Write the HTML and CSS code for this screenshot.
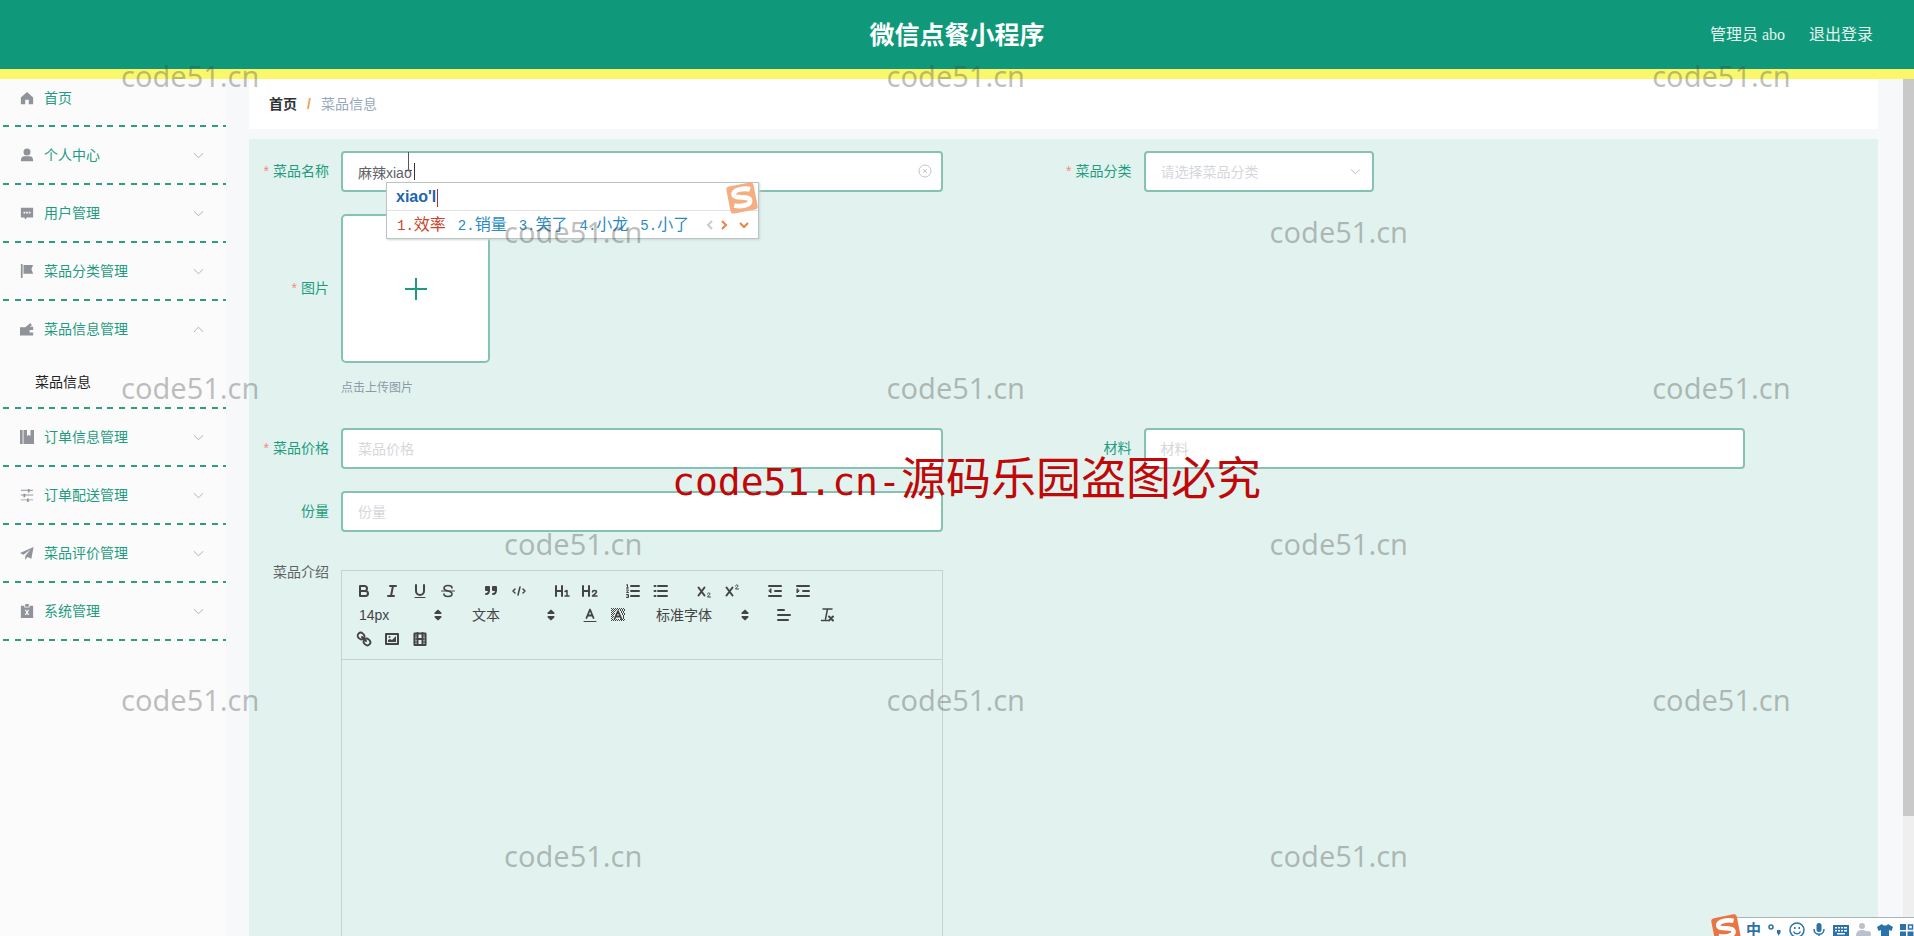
FILE: index.html
```html
<!DOCTYPE html>
<html lang="zh-CN">
<head>
<meta charset="utf-8">
<title>微信点餐小程序</title>
<link rel="stylesheet" href="styles.css">
</head>
<body>
<svg class="defs" aria-hidden="true">
  <symbol id="chev" viewBox="0 0 12 12"><path d="M1 3.500l5 5 5-5" fill="none" stroke="currentColor"/></symbol>
  <symbol id="sort" viewBox="0 0 18 18"><path d="M6 7l3-3 3 3zM6 11l3 3 3-3z" fill="currentColor" stroke="currentColor" stroke-width="2" stroke-linejoin="round"/></symbol>
  <symbol id="sogou" viewBox="0 0 32 32"><g transform="rotate(-11 16 16)"><rect x="3" y="3" width="26" height="26" rx="3" fill="currentColor"/><path d="M25 9.500C20 7 9 6.500 9 11.500c0 4.500 14 3 14 8 0 5-10 4.500-15.500 2" fill="none" stroke="#fff" stroke-width="4.500"/></g></symbol>
</svg>
<div class="app">
  <header class="topbar">
    <h1 class="brand">微信点餐小程序</h1>
    <nav class="account"><a href="#">管理员 abo</a><a href="#">退出登录</a></nav>
  </header>
  <div class="body">
    <aside class="sidebar">
      <ul class="menu">
        <li class="item first"><a class="link" href="#"><svg viewBox="0 0 16 16"><path d="M8 1L1 7.500V15h5v-5h4v5h5V7.500z"/></svg><span>首页</span></a></li>
        <li class="item"><a class="link" href="#"><svg viewBox="0 0 16 16"><circle cx="8" cy="4.500" r="4"/><path d="M1 15c0-4 1.500-5.500 4-5.500h6c2.500 0 4 1.500 4 5.500z"/></svg><span>个人中心</span><svg class="chev"><use href="#chev"/></svg></a></li>
        <li class="item"><a class="link" href="#"><svg viewBox="0 0 16 16"><path fill-rule="evenodd" d="M1 2h14v11H8l-2 2.500L5 13H1zM4 6.500v2h2v-2zm3 0v2h2v-2zm3 0v2h2v-2z"/></svg><span>用户管理</span><svg class="chev"><use href="#chev"/></svg></a></li>
        <li class="item"><a class="link" href="#"><svg viewBox="0 0 16 16"><path d="M1 0h2v16H1zM4 1h11l-2 5 2 5H4z"/></svg><span>菜品分类管理</span><svg class="chev"><use href="#chev"/></svg></a></li>
        <li class="item"><a class="link" href="#"><svg viewBox="0 0 16 16"><path d="M0 6h6l6-5 1.500 3L11 5.500h4V9h-4v3h4v3.500H0z"/></svg><span>菜品信息管理</span><svg class="chev up"><use href="#chev"/></svg></a>
          <a class="sub" href="#">菜品信息</a></li>
        <li class="item"><a class="link" href="#"><svg viewBox="0 0 16 16"><path d="M0 0h3v16H0zM4 0h4v7l2-1.500L12 7V0h4v16H4z"/></svg><span>订单信息管理</span><svg class="chev"><use href="#chev"/></svg></a></li>
        <li class="item"><a class="link" href="#"><svg viewBox="0 0 16 16"><path d="M1 2h8V1h2v1h4v1h-4v2H9V3H1zM1 7.500h3v-1h2v1h9v1H6v2H4v-2H1zM1 13h7v-1h2v1h5v1h-5v2H8v-2H1z"/></svg><span>订单配送管理</span><svg class="chev"><use href="#chev"/></svg></a></li>
        <li class="item"><a class="link" href="#"><svg viewBox="0 0 16 16"><path d="M15.500 1L0 8l4 2 8-6-6 7.500V16l2.500-3.500 4.500 2z"/></svg><span>菜品评价管理</span><svg class="chev"><use href="#chev"/></svg></a></li>
        <li class="item"><a class="link" href="#"><svg viewBox="0 0 16 16"><path fill-rule="evenodd" d="M1 2h4v2h6V2h4v14H1zM6 0h4v3H6zM5.500 6.500L7 9.500l-1.500 3H7l1-2 1 2h1.500l-1.500-3 1.500-3H9l-1 2-1-2z"/></svg><span>系统管理</span><svg class="chev"><use href="#chev"/></svg></a></li>
      </ul>
    </aside>
    <main class="main">
      <nav class="crumbs"><a class="home" href="#">首页</a><span class="slash">/</span><span>菜品信息</span></nav>
      <form class="form">
        <div class="field">
          <label class="label req" for="name">菜品名称</label>
          <div class="control"><input class="input" id="name" type="text" value="麻辣xiao">
            <svg class="clear" viewBox="0 0 14 14"><circle cx="7" cy="7" r="6"/><path d="M5 5l4 4M9 5l-4 4"/></svg>
            <i class="caret"></i>
            <svg class="beam" viewBox="0 0 9 19"><path d="M4.500 0v17M1 18.500h2.500l1-1.500 1 1.500H8"/></svg>
            <div class="ime">
              <div class="typed">xiao'l</div>
              <div class="words"><span class="on"><i>1.</i>效率</span><span><i>2.</i>销量</span><span><i>3.</i>笑了</span><span><i>4.</i>小龙</span><span><i>5.</i>小了</span>
                <svg class="pager" viewBox="0 0 44 12"><path d="M6 2L2 6l4 4" stroke="#c8ccd0"/><path d="M16 2l4 4-4 4M34 4l4 4 4-4" stroke="#ee8043" stroke-width="2"/></svg></div>
              <svg class="imelogo"><use href="#sogou"/></svg>
            </div>
          </div>
        </div>
        <div class="field">
          <label class="label req" for="cat">菜品分类</label>
          <div class="control"><div class="pick"><select class="input" id="cat"><option>请选择菜品分类</option></select><svg><use href="#chev"/></svg></div></div>
        </div>
        <div class="field wide">
          <label class="label req upl" for="pic">图片</label>
          <div class="control"><button class="upload" id="pic" type="button" aria-label="图片"><svg viewBox="0 0 24 24"><path d="M12 1v22M1 12h22"/></svg></button><p class="hint">点击上传图片</p></div>
        </div>
        <div class="field">
          <label class="label req" for="price">菜品价格</label>
          <div class="control"><input class="input" id="price" type="text" placeholder="菜品价格"></div>
        </div>
        <div class="field">
          <label class="label" for="mat">材料</label>
          <div class="control"><input class="input" id="mat" type="text" placeholder="材料"></div>
        </div>
        <div class="field wide">
          <label class="label" for="amount">份量</label>
          <div class="control"><input class="input" id="amount" type="text" placeholder="份量"></div>
        </div>
        <div class="field wide intro">
          <span class="label plain" id="intro">菜品介绍</span>
          <div class="control editor">
            <div class="tools">
              <div class="grp">
                <button type="button" aria-label="粗体"><svg viewBox="0 0 18 18"><path d="M5 4h4.500a2.500 2.500 0 0 1 0 5H5zM5 9h5.500a2.500 2.500 0 0 1 0 5H5z"/></svg></button>
                <button type="button" aria-label="斜体"><svg viewBox="0 0 18 18"><path d="M7 4h6M5 14h6M8 14l2-10"/></svg></button>
                <button type="button" aria-label="下划线"><svg viewBox="0 0 18 18"><path d="M5 3v6a4 4 0 0 0 8 0V3"/><path d="M4 15.500h10" stroke-width="1"/></svg></button>
                <button type="button" aria-label="删除线"><svg viewBox="0 0 18 18"><path d="M2.500 9h13" stroke-width="1"/><path d="M13 6c0-1.500-1.800-2.500-4-2.500S5 4.500 5 6.300 6.500 8.500 9 9s4 1 4 3-1.800 2.500-4 2.500-4-1-4-2.500" stroke-width="1.600"/></svg></button>
              </div>
              <div class="grp">
                <button type="button" aria-label="引用"><svg viewBox="0 0 18 18"><path class="f" d="M4 5h3v3H4zM11 5h3v3h-3z"/><path d="M7 8c0 2.800-.7 4-3 4M14 8c0 2.800-.7 4-3 4"/></svg></button>
                <button type="button" aria-label="代码"><svg viewBox="0 0 18 18"><path d="M5 7L3 9l2 2M13 7l2 2-2 2M10 5L8 13" stroke-width="1.500"/></svg></button>
              </div>
              <div class="grp">
                <button type="button" aria-label="标题1"><svg viewBox="0 0 18 18"><path d="M3 4v10M9 4v10M3 9h6"/><path d="M12 9.500l2-1V14M12 14h4" stroke-width="1.500"/></svg></button>
                <button type="button" aria-label="标题2"><svg viewBox="0 0 18 18"><path d="M2 4v10M8 4v10M2 9h6"/><path d="M11.500 10c0-2 4-2 4 0 0 1.500-3 2.300-4 4h4.500" stroke-width="1.500"/></svg></button>
              </div>
              <div class="grp">
                <button type="button" aria-label="有序列表"><svg viewBox="0 0 18 18"><path d="M7 4h8M7 9h8M7 14h8" /><path d="M2.500 3l1-.5V6M2.500 6h2M2.500 8h2l-2 2.500h2M2.500 12.500h2v3h-2M3 14h1.500" stroke-width="1"/></svg></button>
                <button type="button" aria-label="无序列表"><svg viewBox="0 0 18 18"><path d="M6 4h9M6 9h9M6 14h9M2.500 4h1M2.500 9h1M2.500 14h1"/></svg></button>
              </div>
              <div class="grp">
                <button type="button" aria-label="下标"><svg viewBox="0 0 18 18"><path d="M3.500 5.500l6 8M9.500 5.500l-6 8"/><path d="M12.500 12c0-1.500 2.500-1.500 2.500 0 0 1-2 1.500-2.500 3H15.500" stroke-width="1"/></svg></button>
                <button type="button" aria-label="上标"><svg viewBox="0 0 18 18"><path d="M3.500 5.500l6 8M9.500 5.500l-6 8"/><path d="M12.500 4c0-1.500 2.500-1.500 2.500 0 0 1-2 1.500-2.500 3H15.500" stroke-width="1"/></svg></button>
              </div>
              <div class="grp">
                <button type="button" aria-label="减少缩进"><svg viewBox="0 0 18 18"><path d="M3 14h12M3 4h12M9 9h6"/><path class="f" d="M5 7v4L3 9z" stroke-width="1"/></svg></button>
                <button type="button" aria-label="增加缩进"><svg viewBox="0 0 18 18"><path d="M3 14h12M3 4h12M9 9h6"/><path class="f" d="M3 7v4l2-2z" stroke-width="1"/></svg></button>
              </div>
              <div class="grp"><span class="drop"><select aria-label="字号"><option>14px</option></select><svg><use href="#sort"/></svg></span></div>
              <div class="grp"><span class="drop"><select aria-label="段落"><option>文本</option></select><svg><use href="#sort"/></svg></span></div>
              <div class="grp">
                <button type="button" aria-label="文字颜色"><svg viewBox="0 0 18 18"><path d="M3 15.500h12" stroke-width="1"/><path d="M5.500 12L9 3.500l3.500 8.500M7 9.500h4" stroke-width="1.800"/></svg></button>
                <button type="button" aria-label="背景颜色"><svg viewBox="0 0 18 18"><g stroke-width="1" stroke-linecap="butt" stroke-dasharray="1 1"><path d="M2 2.500h14M3 3.500h13M2 4.500h5M11 4.500h5M3 5.500h4M12 5.500h4M2 6.500h4M12 6.500h4M3 7.500h3M13 7.500h3M2 8.500h3M13 8.500h3M3 9.500h2M14 9.500h2M2 10.500h3M14 10.500h2M3 11.500h2M14 11.500h2M2 12.500h2M14 12.500h2M3 13.500h13M2 14.500h14"/></g><path d="M5.500 13L9 5l3.500 8M7 10.500h4" stroke-width="1.800"/></svg></button>
              </div>
              <div class="grp"><span class="drop font"><select aria-label="字体"><option>标准字体</option></select><svg><use href="#sort"/></svg></span></div>
              <div class="grp"><button type="button" aria-label="对齐"><svg viewBox="0 0 18 18"><path d="M3 9h12M3 14h10M3 4h6"/></svg></button></div>
              <div class="grp"><button type="button" aria-label="清除格式"><svg viewBox="0 0 18 18"><path d="M5 3h9M9.500 3L7.500 13M3.500 14.500h6" stroke-width="1.500"/><path d="M11 10.500l4 4M15 10.500l-4 4"/></svg></button></div>
              <div class="grp">
                <button type="button" aria-label="链接"><svg viewBox="0 0 18 18"><path d="M7 7l4 4"/><rect x="2.500" y="3" width="7" height="6" rx="3" transform="rotate(45 6 6)" stroke-width="1.800"/><rect x="8.500" y="9" width="7" height="6" rx="3" transform="rotate(45 12 12)" stroke-width="1.800"/></svg></button>
                <button type="button" aria-label="图片"><svg viewBox="0 0 18 18"><rect x="3" y="4" width="12" height="10"/><path class="n" d="M5 12v-2l2-1 2 1 4-4v6z"/><circle class="n" cx="6.500" cy="7" r="1"/></svg></button>
                <button type="button" aria-label="视频"><svg viewBox="0 0 18 18"><rect x="3.500" y="3.500" width="11" height="11.500"/><path d="M6.500 3v12M11.500 3v12M6 9h6"/><path d="M3 6h3M3 9h3M3 12h3M12 6h3M12 9h3M12 12h3" stroke-width="1"/></svg></button>
              </div>
            </div>
            <div class="page" contenteditable="true" role="textbox" aria-labelledby="intro"></div>
          </div>
        </div>
      </form>
    </main>
    <div class="scroll"><div class="thumb"></div></div>
  </div>

  <div class="marks" aria-hidden="true">
    <div class="row"><span>code51.cn</span><span>code51.cn</span><span>code51.cn</span></div>
    <div class="row odd"><span>code51.cn</span><span>code51.cn</span></div>
    <div class="row"><span>code51.cn</span><span>code51.cn</span><span>code51.cn</span></div>
    <div class="row odd"><span>code51.cn</span><span>code51.cn</span></div>
    <div class="row"><span>code51.cn</span><span>code51.cn</span><span>code51.cn</span></div>
    <div class="row odd"><span>code51.cn</span><span>code51.cn</span></div>
  </div>
  <div class="notice"><span class="latin">code51.cn-</span>源码乐园盗图必究</div>
  <div class="imebar">
    <svg class="barlogo"><use href="#sogou"/></svg>
    <span>中</span>
    <svg viewBox="0 0 16 16"><circle cx="4" cy="5" r="2" fill="none" stroke="currentColor" stroke-width="1.500"/><path d="M10 8h3.500v3L11 14v-2.500h-1z"/></svg>
    <svg viewBox="0 0 16 16"><g fill="none" stroke="currentColor" stroke-width="1.500"><circle cx="8" cy="8" r="7"/><path d="M4.500 9.500c1.500 3 5.500 3 7 0"/></g><path d="M5 5h1.500v2H5zM9.500 5H11v2H9.500z"/></svg>
    <svg viewBox="0 0 16 16"><rect x="5.500" y="1" width="5" height="9" rx="2.500"/><path d="M3 7c0 7 10 7 10 0M8 12v3M5 15h6" fill="none" stroke="currentColor" stroke-width="1.500"/></svg>
    <svg viewBox="0 0 16 16"><path fill-rule="evenodd" d="M0 3h16v11H0zM2 5v1.500h2V5zm3 0v1.500h2V5zm3 0v1.500h2V5zm3 0v1.500h3V5zM2 8v1.500h2V8zm3 0v1.500h2V8zm3 0v1.500h2V8zm3 0v1.500h3V8zM4 11v1.500h8V11z"/></svg>
    <svg class="dim" viewBox="0 0 16 16"><circle cx="7" cy="4" r="3"/><path d="M1 14c0-4 2-6 6-6s6 2 6 6z"/><circle cx="13" cy="12" r="3"/></svg>
    <svg viewBox="0 0 16 16"><path d="M5 2c1 2 5 2 6 0l5 3-1.500 4-2.500-1v7H4V8L1.500 9 0 5z"/></svg>
    <svg viewBox="0 0 16 16"><path d="M1 2h6v6H1zM1 9.500h6v6H1zM8.500 9.500h6v6h-6z"/><path d="M9.500 3h4v4h-4z" fill="none" stroke="currentColor" stroke-width="1.500"/></svg>
  </div>
</div>
</body>
</html>
```
FILE: styles.css
```css
* { box-sizing: border-box; }
body {
  margin: 0;
  overflow: hidden;
  background: #f7f8fa;
  font: 14px/20px "Liberation Sans", "Noto Sans CJK SC", sans-serif;
  color: #606266;
}
a { color: inherit; text-decoration: none; }
button { font: inherit; cursor: pointer; }
.defs { position: absolute; width: 0; height: 0; }
.app { position: relative; display: flex; flex-direction: column; height: 100vh; overflow: hidden; }

.topbar {
  display: grid;
  grid-template-columns: 1fr auto 1fr;
  align-items: center;
  flex: none;
  height: 79px;
  padding: 0 41px;
  background: #0f987a;
  border-bottom: 10px solid #fbf76b;
  color: #e4f3ef;
}
.brand { grid-column: 2; margin: 0; color: #fff; font-size: 25px; line-height: 36px; font-weight: 700; }
.account { display: flex; justify-content: flex-end; gap: 24px; font: 16px/24px "Liberation Serif", "Noto Sans CJK SC", serif; }

.body { display: flex; flex: 1; min-height: 0; }
.sidebar { flex: none; width: 226px; background: #fbfbfb; }
.menu { margin: 0; padding: 0 0 0 3px; list-style: none; }
.item {
  padding-bottom: 2px;
  background: repeating-linear-gradient(90deg,
    #2d9c82 0 6px, transparent 6px 12px, #2d9c82 12px 18px, transparent 18px 23px,
    #2d9c82 23px 29px, transparent 29px 35px, #2d9c82 35px 41px, transparent 41px 46px,
    #2d9c82 46px 52px, transparent 52px 58px) bottom / 100% 2px no-repeat;
}
.link { display: flex; align-items: center; gap: 10px; height: 56px; padding: 0 22px 0 17px; color: #1f9c80; }
.first .link { height: 46px; padding-bottom: 9px; }
.link svg { width: 14px; height: 14px; fill: #909399; }
.link .chev { width: 11px; height: 11px; margin-left: auto; color: #a9acb2; }
.link .up { transform: rotate(180deg); }
.sub { display: block; padding: 15px 32px; color: #222; }

.main { flex: 1; min-width: 0; margin: 0 25px 0 23px; display: flex; flex-direction: column; gap: 10px; }
.crumbs { display: flex; gap: 10px; flex: none; padding: 15px 20px; background: #fff; color: #97a8be; }
.home { color: #303133; font-weight: 700; }
.slash { width: 4px; color: #e9a04f; font-weight: 700; }

.form {
  flex: none;
  display: grid;
  grid-template-columns: 1fr 1fr;
  row-gap: 22px;
  padding: 12px;
  background: #e2f3ef;
}
.field { display: flex; align-items: flex-start; }
.wide { grid-column: 1 / -1; }
.label { flex: none; width: 80px; padding: 10px 12px 10px 0; text-align: right; white-space: nowrap; color: #1f9c80; line-height: 20px; }
.req::before { content: "*"; margin-right: 4px; color: #f28b82; }
.label.req { margin-left: -10px; width: 90px; }
.upl { padding-top: 64px; }
.plain { color: #606266; padding-top: 0; margin-top: -8px; }
.control { position: relative; width: 75%; }
.wide .control { width: 37.5%; }
.input {
  display: block;
  width: 100%;
  height: 41px;
  padding: 0 15px;
  border: 2px solid #86c2b4;
  border-radius: 4px;
  background: #fff;
  font: inherit;
  color: #606266;
  outline: none;
  appearance: none;
}
.input::placeholder { color: #d5d7db; opacity: 1; }
.pick { position: relative; width: 230px; }
.pick .input { color: #d5d7db; }
.pick svg { position: absolute; right: 13px; top: 15px; width: 11px; height: 11px; color: #b5b8be; }
.clear { position: absolute; right: 11px; top: 13px; width: 14px; height: 14px; fill: none; stroke: #c0c4cc; }
.caret { position: absolute; left: 73px; top: 12px; width: 1px; height: 17px; background: #333; }
.beam { position: absolute; left: 63px; top: 1px; width: 9px; height: 19px; fill: none; stroke: #555; }
.upload {
  display: flex;
  align-items: center;
  justify-content: center;
  width: 149px;
  height: 149px;
  padding: 0;
  border: 2px solid #86c2b4;
  border-radius: 5px;
  background: #fff;
}
.upload svg { width: 24px; height: 24px; stroke: #1f9c80; stroke-width: 2; }
.hint { margin: 15px 0 8px; font-size: 12px; line-height: 20px; color: #8b9aa8; }

.ime {
  position: absolute;
  left: 45px;
  top: 31px;
  z-index: 2;
  width: 373px;
  border: 1px solid #b9c4c4;
  background: #fff;
  box-shadow: 1px 1px 2px #ccd6d4;
}
.typed { margin-left: 9px; font-size: 16px; line-height: 27px; font-weight: 700; color: #2065b2; }
.typed::after { content: ""; display: inline-block; height: 18px; margin-left: 1px; border-left: 1px solid #a33; vertical-align: middle; }
.words { display: flex; align-items: center; gap: 12px; padding-left: 10px; border-top: 1px solid #e3e3e3; font-size: 16px; line-height: 27px; color: #2b8bbf; white-space: nowrap; }
.words i { font: 14px/20px "Liberation Mono", monospace; }
.on { color: #c8452f; }
.pager { width: 44px; height: 12px; margin-left: 5px; fill: none; stroke-width: 2; }
.imelogo { position: absolute; right: -1px; top: -2px; width: 34px; height: 34px; color: #f5ad82; }

.intro { margin-top: 16px; }
.editor { border: 1px solid #c4d3cf; }
.tools { display: flex; flex-wrap: wrap; column-gap: 15px; padding: 8px 72px 8px 8px; border-bottom: 1px solid #c4d3cf; }
.grp { display: flex; }
.tools button { width: 28px; height: 24px; padding: 3px 5px; border: 0; background: none; }
.tools button svg { display: block; width: 18px; height: 18px; fill: none; stroke: #444; stroke-width: 2; stroke-linecap: round; stroke-linejoin: round; }
.tools .f { fill: #444; }
.tools .n { fill: #444; stroke: none; }
.drop { position: relative; width: 98px; height: 24px; }
.drop.font { width: 108px; }
.drop select { width: 100%; height: 24px; padding: 0 8px 0 9px; border: 0; background: none; font: 14px/24px "Liberation Sans", "Noto Sans CJK SC", sans-serif; color: #444; appearance: none; }
.drop svg { position: absolute; right: 2px; top: 4px; width: 16px; height: 16px; color: #444; }
.page { height: 400px; outline: none; }

.scroll { flex: none; width: 11px; background: #efefef; }
.thumb { height: 86%; background: #c9c9c9; }

.marks { position: absolute; inset: 56px 0 auto 0; z-index: 3; display: flex; flex-direction: column; gap: 116px; pointer-events: none; font: 29px/40px "Noto Sans", sans-serif; color: rgba(70, 70, 70, .34); }
.row { display: grid; grid-template-columns: 40% 40% 20%; padding-left: 121px; margin-right: -121px; }
.row.odd { padding-left: 504px; margin-right: -504px; }
.notice { position: absolute; left: 0; right: 0; top: 443px; z-index: 4; padding-left: 19px; text-align: center; white-space: nowrap; font: 45px/66px "Noto Sans CJK SC", sans-serif; color: #c00808; pointer-events: none; }
.latin { font-family: "DejaVu Sans Mono", monospace; font-size: 38px; }
.imebar { position: absolute; right: 0; bottom: 0; z-index: 5; display: flex; align-items: center; gap: 6px; width: 180px; height: 19px; padding: 6px 0 0 12px; border-top: 1px solid #aab5b8; background: #fff; color: #2a72a8; white-space: nowrap; }
.imebar span { width: 16px; font-size: 15px; font-weight: 700; }
.imebar svg { flex: none; width: 16px; height: 16px; fill: currentColor; }
.imebar .dim { color: #b9c2cc; }
.imebar .barlogo { position: absolute; left: -24px; top: -5px; width: 32px; height: 32px; color: #ea7544; }
```
